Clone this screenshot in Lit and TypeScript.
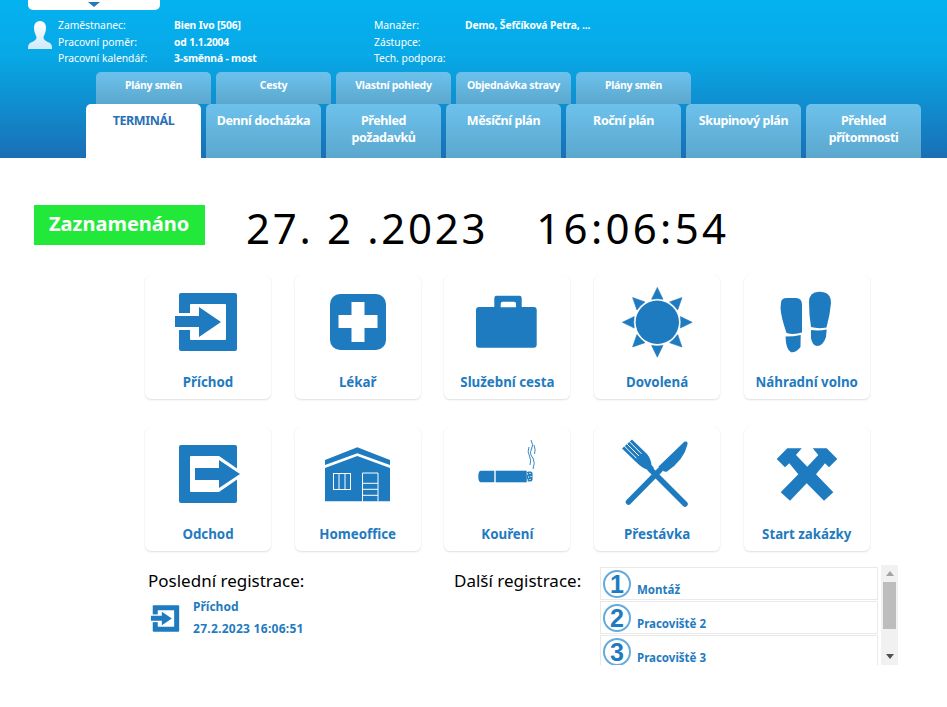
import { LitElement, html, css, svg } from 'lit';
import { customElement } from 'lit/decorators.js';

const BLUE = '#1f7bc0';

/* all action icons share one 126x90 box, coordinates are relative to the card */
const icons: Record<string, unknown> = {
    in: svg`
      <rect x="34" y="18" width="58" height="58" rx="2" fill="${BLUE}"/>
      <rect x="45" y="29" width="36" height="36" rx="1" fill="#fff"/>
      <rect x="30" y="38" width="18" height="17" fill="#fff"/>
      <path d="M30 41H54V32L76 47L54 62V52H30Z" fill="${BLUE}"/>`,
    doctor: svg`
      <rect x="35" y="19" width="56" height="56" rx="10" fill="${BLUE}"/>
      <path d="M56.5 27H69.5V40H82.5V53H69.5V67H56.5V53H43.5V40H56.5Z" fill="#fff"/>`,
    case: svg`
      <path fill-rule="evenodd" fill="${BLUE}" d="M50.3 32V23Q50.3 20.7 52.6 20.7H75.4Q77.7 20.7 77.7 23V32H89.7Q92.7 32 92.7 35V69.7Q92.7 72.7 89.7 72.7H35Q32 72.7 32 69.7V35Q32 32 35 32ZM56.7 32.3H72V28.5Q72 26.7 70 26.7H58.7Q56.7 26.7 56.7 28.5Z"/>`,
    sun: svg`
      <circle cx="63.3" cy="47.3" r="21.7" fill="${BLUE}"/>
      ${[0, 45, 90, 135, 180, 225, 270, 315].map(
          (a) => svg`<path transform="rotate(${a} 63.3 47.3)" d="M63.3 12.4L69 24.2Q63.3 23.2 57.6 24.2Z" fill="${BLUE}" stroke="${BLUE}" stroke-width=".6" stroke-linejoin="round"/>`
      )}`,
    feet: svg`
      <g fill="${BLUE}">
        <path d="M37 28Q37 23 43 23H52Q58 23 58 30V57.5Q50 60 42.5 58Q37 42 36.5 33Z"/>
        <path d="M41.5 61.5Q50 61.5 56.7 60L56.5 72Q52 78 47 77.3Q42 75 41.5 61.5Z"/>
        <path d="M65 27Q65 17 75 16.7Q87 16.5 87 28Q86 40 82.5 52.5Q74 54 67 52Q65 40 65 27Z"/>
        <path d="M67 55Q75 56 82.7 54.5L82 62Q79 71 73 71Q68 70 67 63Z"/>
      </g>`,
    out: svg`
      <rect x="34" y="18" width="58" height="58" rx="2" fill="${BLUE}"/>
      <path d="M46 29H74L100 47L74 65H46Q45 65 45 64V30Q45 29 46 29Z" fill="#fff"/>
      <path d="M50 41H74V33L95 47L74 61V53H50Z" fill="${BLUE}"/>`,
    home: svg`
      <path d="M30 33L62.3 20.3L95 33V38L62.3 26.3L30 38Z" fill="${BLUE}"/>
      <path d="M30 41L62.3 29L95 41V74.3H30Z" fill="${BLUE}"/>
      <g fill="none" stroke="#fff" stroke-width="1">
        <rect x="38.5" y="46.5" width="17" height="16"/>
        <path d="M44 46.5V62.5M50 46.5V62.5"/>
        <path d="M67.5 74.3V46H83V74.3M67.5 56.3H83M67.5 62.3H83M67.5 68.3H83"/>
      </g>`,
    smoke: svg`
      <path d="M37 43.7H50.3V55.3H37Q34.3 55.3 34.3 49.5Q34.3 43.7 37 43.7Z" fill="${BLUE}"/>
      <rect x="51.7" y="43.7" width="31" height="11.6" fill="${BLUE}"/>
      <rect x="82.7" y="44.5" width="5.8" height="10" rx="2" fill="${BLUE}"/>
      <g fill="#fff">
        <circle cx="83.5" cy="47" r=".7"/><circle cx="86" cy="46.5" r=".7"/><circle cx="84.5" cy="50" r=".7"/>
        <circle cx="87" cy="49.5" r=".7"/><circle cx="83.5" cy="53" r=".7"/><circle cx="86" cy="52.5" r=".7"/>
      </g>
      <g fill="none" stroke="${BLUE}" stroke-width=".9">
        <path d="M87 13Q90 18 87.5 22Q85 27 89 31Q91.5 36 89 42"/>
        <path d="M85 20Q83 25 85.5 29Q87.5 33 86 38"/>
        <path d="M90 18Q92 23 90.5 27"/>
      </g>`,
    meal: svg`
      <path d="M34.5 75L66 43" stroke="${BLUE}" stroke-width="5.5" stroke-linecap="round"/>
      <path d="M90.3 14.7Q94.5 13.5 93.3 18Q90 33 72.7 44.7L70 44.5L64.3 39.7Z" fill="${BLUE}"/>
      <path d="M91 77L56 42" stroke="${BLUE}" stroke-width="5.5" stroke-linecap="round"/>
      <path d="M28 21.5L38 12.5L53 27Q57 32 57.5 38L60 41L56 45L53 42.5Q48 41 42 35Z" fill="${BLUE}"/>
      <path d="M29.5 18.25L42.5 31.25M32 16L45 29M34.5 13.75L47.5 26.75" stroke="#fff" stroke-width="1"/>`,
    hammers: svg`
      <path fill="${BLUE}" d="M63.3 39.7L74.3 28L68.7 21.3H82.7L93.3 32L85 40.3L81 36.3L72 47.3L89.3 65.3L80 73.7L62.7 56.3L46 73.7L36.7 65.3L54.3 47.3L45.3 36.3L41 40.3L32.7 32L43.3 21.3H57.7L52 28Z"/>`,
};

const actions = [
    ['Příchod', 'in'],
    ['Lékař', 'doctor'],
    ['Služební cesta', 'case'],
    ['Dovolená', 'sun'],
    ['Náhradní volno', 'feet'],
    ['Odchod', 'out'],
    ['Homeoffice', 'home'],
    ['Kouření', 'smoke'],
    ['Přestávka', 'meal'],
    ['Start zakázky', 'hammers'],
];

const subTabs = ['Plány směn', 'Cesty', 'Vlastní pohledy', 'Objednávka stravy', 'Plány směn'];
const mainTabs = ['Denní docházka', 'Přehled požadavků', 'Měsíční plán', 'Roční plán', 'Skupinový plán', 'Přehled přítomnosti'];
const jobs = ['Montáž', 'Pracoviště 2', 'Pracoviště 3'];

@customElement('app-root')
export class AppRoot extends LitElement {
    static styles = css`
    :host {
      display: block;
      height: 707px;
      overflow: hidden;
      background: #fff;
      font-family: 'Noto Sans', sans-serif;
    }

    header {
      height: 158px;
      display: flex;
      flex-direction: column;
      background: linear-gradient(#04b2f0 0%, #07a9e6 35%, #1a6fb6 100%);
      color: #fff;
    }

    .user-tab {
      width: 132px;
      height: 10px;
      margin-left: 28px;
      display: flex;
      justify-content: center;
      padding-top: 2px;
      box-sizing: border-box;
      background: #fff;
      border-radius: 0 0 5px 5px;
    }

    .caret {
      width: 0;
      height: 0;
      border: 6px solid transparent;
      border-top: 5px solid #1f7bc0;
      border-bottom: 0;
    }

    .info {
      height: 62px;
      margin-left: 28px;
      padding-top: 7px;
      box-sizing: border-box;
      display: flex;
      font-size: 10.3px;
      line-height: 16.5px;
    }

    .person {
      width: 24px;
      height: 30px;
      margin-top: 3px;
      margin-right: 6px;
    }

    .col {
      display: flex;
      flex-direction: column;
    }

    .c1 { width: 116px; }
    .c2 { width: 200px; }
    .c3 { width: 91px; }

    .val {
      font-weight: 700;
      letter-spacing: -0.15px;
    }

    .tabs {
      display: flex;
      gap: 5px;
    }

    .tabs.sub {
      margin-left: 96px;
      height: 32px;
    }

    .tabs.main {
      margin-left: 86px;
      height: 54px;
    }

    .tab {
      width: 115px;
      box-sizing: border-box;
      text-align: center;
      border-radius: 5px 5px 0 0;
      background: linear-gradient(#6cc2ec, #5ba7ce);
      font-weight: 700;
    }

    .sub .tab {
      font-size: 10.5px;
      line-height: 14px;
      padding-top: 6px;
      letter-spacing: -0.3px;
    }

    .main .tab {
      font-size: 12.5px;
      line-height: 17px;
      padding: 8px 5px 0;
      letter-spacing: -0.4px;
    }

    .main .tab.active {
      background: #fff;
      color: #2a70b6;
    }

    .status {
      display: flex;
      align-items: center;
      margin: 47px 0 0 34px;
      height: 40px;
    }

    .badge {
      width: 171px;
      height: 40px;
      box-sizing: border-box;
      padding-left: 15px;
      background: #22e83a;
      color: #fff;
      font-size: 20px;
      font-weight: 700;
      line-height: 38px;
    }

    .clock {
      display: flex;
      gap: 48px;
      margin: 6px 0 0 41px;
      font-size: 42px;
      line-height: 46px;
      letter-spacing: 3.3px;
      color: #000;
      white-space: pre;
    }

    .clock .date {
      letter-spacing: 2.7px;
    }

    .grid {
      display: grid;
      grid-template-columns: repeat(5, 126px);
      column-gap: 23.7px;
      row-gap: 28px;
      margin: 30px 0 0 145px;
    }

    .card {
      height: 124px;
      display: flex;
      flex-direction: column;
      align-items: center;
      border-radius: 6px;
      background: #fff;
      box-shadow: 0 1px 2px rgba(0, 0, 0, 0.13), 0 0 1px rgba(0, 0, 0, 0.04);
      color: #1f7bc0;
      font-size: 13.3px;
      font-weight: 700;
    }

    .card svg {
      width: 126px;
      height: 90px;
      flex: none;
    }

    .card span {
      margin-top: 7px;
      line-height: 20px;
    }

    .bottom {
      display: flex;
      margin-top: 14px;
      height: 100px;
      overflow: hidden;
    }

    .heading {
      font-size: 17px;
      line-height: 24px;
      color: #000;
    }

    .last {
      width: 306px;
      margin-left: 148px;
      padding-top: 4px;
    }

    .last-row {
      display: flex;
      margin-top: 3px;
      margin-left: 2px;
      color: #1f7bc0;
      font-size: 12px;
      font-weight: 700;
      line-height: 22px;
    }

    .last-row svg {
      width: 31px;
      height: 31px;
      margin-right: 12px;
      margin-top: 7px;
    }

    .stamp {
      letter-spacing: 0.27px;
    }

    .next {
      width: 146px;
      padding-top: 4px;
    }

    .list {
      width: 278px;
      height: 100px;
      margin-top: 2px;
      overflow: hidden;
    }

    .item {
      height: 31px;
      margin-bottom: 1px;
      display: flex;
      align-items: flex-end;
      gap: 6px;
      padding-left: 2px;
      border: 1px solid #e9e9e9;
      color: #1f7bc0;
      font-size: 11.5px;
      font-weight: 700;
      line-height: 18px;
    }

    .num {
      flex: none;
      width: 24px;
      height: 24px;
      margin-bottom: 1px;
      border: 2px solid #64abdc;
      border-radius: 50%;
      display: flex;
      align-items: center;
      justify-content: center;
      font-family: 'Liberation Sans', sans-serif;
      font-size: 25px;
      line-height: 20px;
      color: #1f7bc0;
    }

    .scrollbar {
      width: 17px;
      height: 100px;
      margin-left: 3px;
      display: flex;
      flex-direction: column;
      align-items: center;
      background: #f1f1f1;
    }

    .arrow {
      flex: none;
      width: 0;
      height: 0;
      margin: 6px 0;
      border: 4px solid transparent;
    }

    .arrow.up { border-top: 0; border-bottom: 5px solid #a3a3a3; }
    .arrow.down { margin-top: auto; border-bottom: 0; border-top: 5px solid #505050; }

    .thumb {
      width: 13px;
      height: 47px;
      background: #bdbdbd;
    }
  `;

    render() {
        return html`
      <header>
        <div class="user-tab"><div class="caret"></div></div>
        <div class="info">
          <svg class="person" viewBox="0 0 24 30">
            <defs>
              <linearGradient id="pg" x1="0" y1="0" x2="0" y2="1">
                <stop offset="0" stop-color="#fff"/>
                <stop offset="1" stop-color="#cfe9f8"/>
              </linearGradient>
            </defs>
            <path fill="url(#pg)" d="M12 1C16 1 18 4 18 8C18 12 16 15.5 15.5 17C15.5 20 18 21 21 22.5C23 23.5 24 25 24 28V29H0V28C0 25 1 23.5 3 22.5C6 21 8.5 20 8.5 17C8 15.5 6 12 6 8C6 4 8 1 12 1Z"/>
          </svg>
          <div class="col c1"><span>Zaměstnanec:</span><span>Pracovní poměr:</span><span>Pracovní kalendář:</span></div>
          <div class="col c2 val"><span>Bien Ivo [506]</span><span>od 1.1.2004</span><span>3-směnná - most</span></div>
          <div class="col c3"><span>Manažer:</span><span>Zástupce:</span><span>Tech. podpora:</span></div>
          <div class="col val"><span>Demo, Šefčíková Petra, ...</span></div>
        </div>
        <div class="tabs sub">${subTabs.map((t) => html`<div class="tab">${t}</div>`)}</div>
        <div class="tabs main">
          <div class="tab active">TERMINÁL</div>
          ${mainTabs.map((t) => html`<div class="tab">${t}</div>`)}
        </div>
      </header>

      <div class="status">
        <div class="badge">Zaznamenáno</div>
        <div class="clock"><span class="date">27. 2 .2023</span><span>16:06:54</span></div>
      </div>

      <div class="grid">
        ${actions.map(
            ([label, icon]) => html`
          <div class="card">
            <svg viewBox="0 0 126 90">${icons[icon]}</svg>
            <span>${label}</span>
          </div>`
        )}
      </div>

      <div class="bottom">
        <div class="last">
          <div class="heading">Poslední registrace:</div>
          <div class="last-row">
            <svg viewBox="28 14 68 66">${icons.in}</svg>
            <div>Příchod<br /><span class="stamp">27.2.2023 16:06:51</span></div>
          </div>
        </div>
        <div class="next"><div class="heading">Další registrace:</div></div>
        <div class="list">
          ${jobs.map(
              (j, i) => html`<div class="item"><div class="num">${i + 1}</div><span>${j}</span></div>`
          )}
        </div>
        <div class="scrollbar">
          <div class="arrow up"></div>
          <div class="thumb"></div>
          <div class="arrow down"></div>
        </div>
      </div>
    `;
    }
}
